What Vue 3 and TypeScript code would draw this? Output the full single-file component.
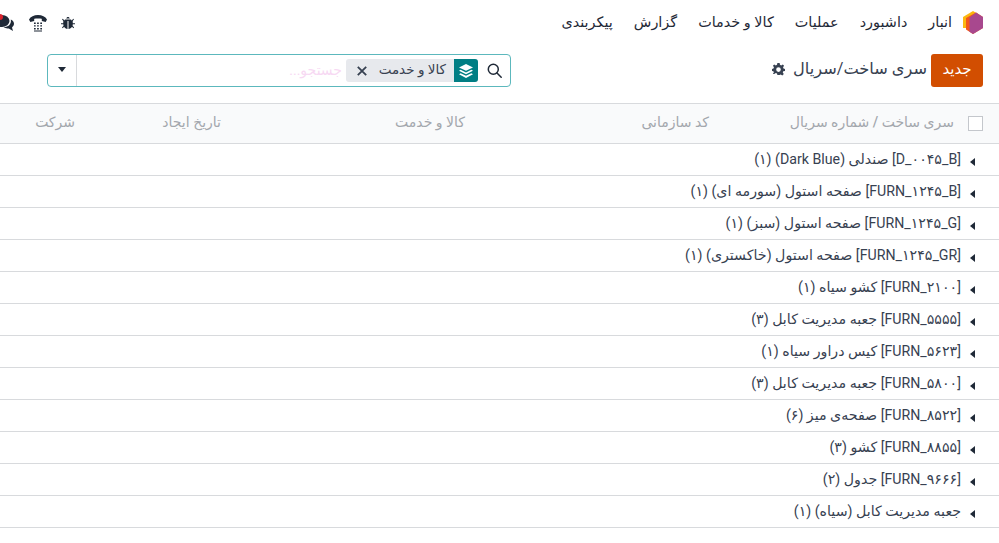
<script setup lang="ts">
const menus = ['داشبورد', 'عملیات', 'کالا و خدمات', 'گزارش', 'پیکربندی']

const headers = [
  { label: 'سری ساخت / شماره سریال', width: 245 },
  { label: 'کد سازمانی', width: 244 },
  { label: 'کالا و خدمت', width: 244 },
  { label: 'تاریخ ایجاد', width: 146 },
  { label: 'شرکت', width: 83 }
]

const groups = [
  '[D_۰۰۴۵_B] صندلی (Dark Blue) (۱)',
  '[FURN_۱۲۴۵_B] صفحه استول (سورمه ای) (۱)',
  '[FURN_۱۲۴۵_G] صفحه استول (سبز) (۱)',
  '[FURN_۱۲۴۵_GR] صفحه استول (خاکستری) (۱)',
  '[FURN_۲۱۰۰] کشو سیاه (۱)',
  '[FURN_۵۵۵۵] جعبه مدیریت کابل (۳)',
  '[FURN_۵۶۲۳] کیس دراور سیاه (۱)',
  '[FURN_۵۸۰۰] جعبه مدیریت کابل (۳)',
  '[FURN_۸۵۲۲] صفحه‌ی میز (۶)',
  '[FURN_۸۸۵۵] کشو (۳)',
  '[FURN_۹۶۶۶] جدول (۲)',
  'جعبه مدیریت کابل (سیاه) (۱)'
]
</script>

<template>
  <div class="page" dir="rtl">
    <header class="navbar">
      <div class="nav-left">
        <svg class="logo" viewBox="0 0 20 23" width="20" height="23">
          <path d="M10 0 15 3 5 17 0 17V6Z" fill="#fbb70f" />
          <path d="M13 1.500 20 6V17L10 23 3 18.500V7Z" fill="#f2571c" />
          <path d="M13 1.500 20 6V17L10 23 6.500 20.800V6.500Z" fill="#a8488e" />
        </svg>
        <span class="app-name">انبار</span>
        <a v-for="m in menus" :key="m" class="menu-item">{{ m }}</a>
      </div>
      <div class="systray">
        <svg width="14" height="14" viewBox="0 0 14 14" fill="#1f2937">
          <path d="M5.200 2.600C5.400 1.600 6.100 1 7 1s1.600.6 1.800 1.600ZM4.500 3.400h5c.5 0 1 .5 1.100 1.200L11.200 4l1-1.300.8.600L11.700 5l.1 2.200H14v1h-2.200l-.2 1.600 1.500 1.700-.8.700-1.200-1.400C10.300 12 9 13 7.500 13V5h-1v8C5 13 3.700 12 3 10.800L1.800 12.200 1 11.500l1.500-1.700-.2-1.600H0v-1h2.200L2.300 5 1 3.300l.8-.6L3 4l.4.600c.1-.7.600-1.200 1.100-1.200Z" />
        </svg>
        <svg width="18" height="18" viewBox="0 0 18 18" fill="#1f2937">
          <path d="M0 5.500C1.500 2.500 5 1 9 1s7.500 1.500 9 4.500L16.700 8 12.800 7V4.800C11.500 4.300 6.500 4.300 5.200 4.800V7L1.300 8Z" />
          <path d="M5 8.500h1.700v1.400H5ZM8.100 8.500h1.700v1.400H8.100ZM11.300 8.500H13v1.400h-1.700ZM5 11.200h1.700v1.400H5ZM8.100 11.200h1.700v1.400H8.100ZM11.300 11.200H13v1.400h-1.700ZM5 14h1.700v1.400H5ZM8.100 14h1.700v1.400H8.100ZM11.300 14H13v1.400h-1.700ZM5 16.500h8v1H5Z" />
        </svg>
        <span class="chat">
          <svg width="20" height="18" viewBox="0 0 20 18" fill="#1f2937">
            <ellipse cx="7" cy="7" rx="7.500" ry="6" />
            <path d="M2 10 1 15 7 12Z" />
            <path d="M15.800 5.500C17.800 6.500 19 8 19 9.800c0 1.500-.8 2.700-2 3.600l1 3.600-4.200-2.600c-2.200.2-4-.2-5.300-1.300 4 .3 8.200-2.500 7.300-7.600Z" />
          </svg>
          <i class="badge"></i>
        </span>
      </div>
    </header>

    <div class="control-panel">
      <div class="title-side">
        <button class="btn-new">جدید</button>
        <span class="title">سری ساخت/سریال</span>
        <svg class="gear" width="13" height="13" viewBox="0 0 14 14" fill="#374151">
          <path fill-rule="evenodd" d="M5.800 0h2.400l.4 2 1.300.6L11.600 1.500 13 3l-1.100 1.700.5 1.300 1.600.4v2.200l-1.900.4-.5 1.300L12.700 11.900 11.100 13.500l-1.700-1-1.300.5-.4 0H5.800l-.4-1.600-1.300-.5-1.700 1L.9 11.900l1.100-1.600-.5-1.300L0 8.600V6.400l1.600-.4.500-1.300L1 3 2.400 1.500l1.700 1.100 1.300-.6ZM7 4.600a2.500 2.500 0 1 0 0 5 2.500 2.500 0 0 0 0-5Z" />
        </svg>
      </div>
      <div class="search">
        <span class="search-icon">
          <svg width="15" height="15" viewBox="0 0 15 15" fill="none" stroke="#1f2937" stroke-width="1.500">
            <circle cx="6.300" cy="6.300" r="5" />
            <path d="M10 10l4.200 4.200" stroke-linecap="round" />
          </svg>
        </span>
        <span class="facet">
          <span class="facet-icon">
            <svg width="14" height="14" viewBox="0 0 14 14" fill="#fff">
              <path d="M7 0 14 3.400 7 6.800 0 3.400Z" />
              <path d="M1.600 5.800 7 8.400l5.400-2.600L14 6.800 7 10.200 0 6.800Z" />
              <path d="M1.600 9.200 7 11.800l5.400-2.600L14 10.200 7 14 0 10.200Z" />
            </svg>
          </span>
          <span class="facet-text">کالا و خدمت</span>
          <svg class="facet-x" width="10" height="10" viewBox="0 0 10 10" stroke="#374151" stroke-width="1.800">
            <path d="M.8.800l8.400 8.400M9.200.800.800 9.200" />
          </svg>
        </span>
        <span class="placeholder">جستجو...</span>
        <span class="search-toggle"><i class="caret-down"></i></span>
      </div>
    </div>

    <table class="list">
      <colgroup>
        <col style="width: 37px" />
        <col v-for="h in headers" :key="h.label" :style="{ width: h.width + 'px' }" />
      </colgroup>
      <thead>
        <tr>
          <th class="check-cell"><span class="checkbox"></span></th>
          <th v-for="h in headers" :key="h.label">{{ h.label }}</th>
        </tr>
      </thead>
      <tbody>
        <tr v-for="g in groups" :key="g">
          <td colspan="6" class="group">
            <i class="caret-left"></i>
            <span>{{ g }}</span>
          </td>
        </tr>
      </tbody>
    </table>
  </div>
</template>

<style>
html,
body {
  margin: 0;
  overflow: hidden;
  background: #fff;
}
</style>

<style scoped>
.page {
  width: 999px;
  height: 543px;
  overflow: hidden;
  font-family: Roboto, "DejaVu Sans", sans-serif;
  font-size: 14px;
  color: #374151;
}

.navbar {
  display: flex;
  justify-content: space-between;
  align-items: center;
  height: 44px;
  padding-right: 16px;
}

.nav-left {
  display: flex;
  align-items: center;
}

.logo {
  margin-left: 11px;
}

.app-name,
.menu-item {
  color: #1f2937;
  margin-left: 21px;
  font-size: 14.4px;
  white-space: nowrap;
}

.systray {
  display: flex;
  align-items: center;
  gap: 14px;
  margin-left: -5px;
  margin-top: 2px;
}

.chat {
  position: relative;
  display: flex;
}

.badge {
  position: absolute;
  top: 0;
  left: 2px;
  width: 6px;
  height: 6px;
  border-radius: 50%;
  background: #d9232e;
}

.control-panel {
  display: flex;
  justify-content: space-between;
  align-items: center;
  height: 33px;
  margin-top: 10px;
  padding: 0 16px 0 47px;
}

.title-side {
  display: flex;
  align-items: center;
  white-space: nowrap;
}

.btn-new {
  width: 52px;
  height: 33px;
  border: 0;
  border-radius: 3px;
  background: #d24e01;
  color: #fff;
  font: inherit;
  font-size: 15px;
  padding: 0 0 4px;
}

.title {
  margin: -4px 4px 0 0;
  font-size: 16.2px;
  color: #374151;
}

.gear {
  margin-right: 8px;
  margin-top: -2px;
}

.search {
  display: flex;
  align-items: center;
  width: 464px;
  height: 33px;
  box-sizing: border-box;
  border: 1px solid #5cb8bd;
  border-radius: 4px;
}

.search-icon {
  display: flex;
  justify-content: center;
  width: 32px;
}

.facet {
  display: flex;
  align-items: center;
  width: 132px;
  height: 23px;
  background: #e7e9ed;
  border-radius: 3px;
}

.facet-icon {
  display: flex;
  align-items: center;
  justify-content: center;
  width: 24px;
  height: 23px;
  background: #017e84;
  border-radius: 0 3px 3px 0;
}

.facet-text {
  flex: 1;
  font-size: 13.5px;
  margin-right: 8px;
  line-height: 20px;
  margin-top: -3px;
  white-space: nowrap;
}

.facet-x {
  margin: 0 0 0 11px;
}

.placeholder {
  flex: 1;
  margin: -2px 4px 0 0;
  font-size: 14px;
  color: #f7d9f3;
}

.search-toggle {
  display: flex;
  align-items: center;
  justify-content: center;
  width: 28px;
  height: 31px;
  border-right: 1px solid #d8dadd;
}

.caret-down {
  border-top: 5px solid #1f2937;
  border-left: 4px solid transparent;
  border-right: 4px solid transparent;
  margin-top: -3px;
}

.list {
  width: 999px;
  margin-top: 16px;
  border-collapse: collapse;
  table-layout: fixed;
}

th {
  height: 40px;
  padding: 0 8px 3px;
  box-sizing: border-box;
  background: #f9fafb;
  border-top: 1px solid #d8dadd;
  border-bottom: 1px solid #d8dadd;
  color: #a3a7ad;
  font-weight: 500;
  font-size: 14px;
  text-align: right;
}

.check-cell {
  padding: 0 16px 0 0;
}

.checkbox {
  display: block;
  width: 13px;
  height: 13px;
  background: #fff;
  border: 1px solid #c4c7cc;
}

td.group {
  height: 32px;
  padding: 0 24px 2px 0;
  box-sizing: border-box;
  border-bottom: 1px solid #d8dadd;
  color: #374151;
  font-size: 14.2px;
  font-weight: 400;
}

.caret-left {
  display: inline-block;
  margin-left: 9px;
  border-right: 5px solid #1f2937;
  border-top: 4px solid transparent;
  border-bottom: 4px solid transparent;
  transform: scaleX(-1) rotate(180deg);
  vertical-align: -2px;
}
</style>
